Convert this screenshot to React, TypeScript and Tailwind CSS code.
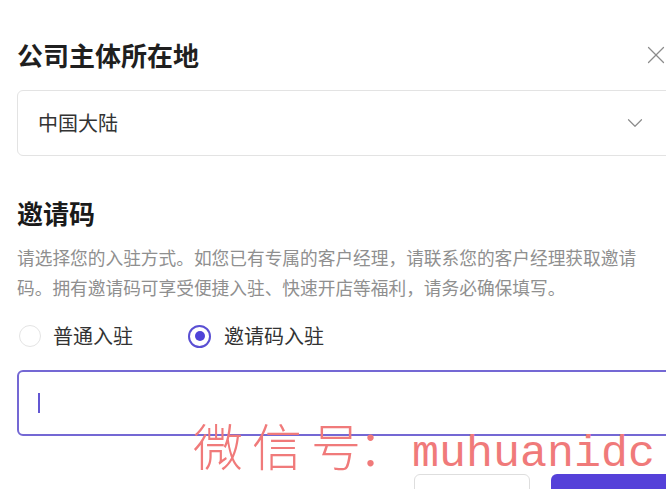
import { X, ChevronDown } from 'lucide-react';

const cjk = { fontFamily: '"Noto Sans CJK SC", "Noto Sans", sans-serif' };

export default function App() {
  return (
    <div className="relative w-[666px] h-[489px] overflow-hidden bg-white" style={cjk}>
      <div className="w-[700px] pl-[17px] pr-[17px] pt-[37px]">
        {/* Header */}
        <div className="flex items-center justify-between h-[36px]">
          <h1 className="text-[26px] leading-[36px] font-semibold text-[#1f1f1f]">公司主体所在地</h1>
          <button className="mr-[12px] text-[#8c8c8c]">
            <X className="w-[30px] h-[30px]" strokeWidth={1} />
          </button>
        </div>

        {/* Region select */}
        <div className="mt-[17px] h-[66px] rounded-[6px] border border-[#e3e3e3] flex items-center justify-between pl-[20px] pr-[34px]">
          <span className="text-[20px] text-[#333333]">中国大陆</span>
          <ChevronDown className="w-[26px] h-[26px] text-[#8c8c8c]" strokeWidth={1.1} />
        </div>

        {/* Invite code */}
        <h2 className="mt-[39px] text-[26px] leading-[36px] font-semibold text-[#1a1a1a]">邀请码</h2>
        <p className="mt-[11px] w-[625px] text-[17.7px] leading-[30px] text-[#8f8f8f]">
          请选择您的入驻方式。如您已有专属的客户经理，请联系您的客户经理获取邀请码。拥有邀请码可享受便捷入驻、快速开店等福利，请务必确保填写。
        </p>

        <div className="mt-[19px] h-[30px] flex items-center">
          <label className="flex items-center gap-[12px]">
            <span className="ml-[2px] w-[22px] h-[22px] rounded-full border border-[#e4e4e4]" />
            <span className="text-[20px] text-[#333333]">普通入驻</span>
          </label>
          <label className="ml-[55px] flex items-center gap-[13px]">
            <span className="w-[23px] h-[23px] rounded-full border-2 border-[#5a4fd3] flex items-center justify-center">
              <span className="w-[10px] h-[10px] rounded-full bg-[#4f43d8]" />
            </span>
            <span className="text-[20px] text-[#333333]">邀请码入驻</span>
          </label>
        </div>

        {/* Code input */}
        <div className="mt-[19px] h-[66px] rounded-[6px] border-2 border-[#7468d4] flex items-center pl-[19px]">
          <span className="w-[2px] h-[20px] bg-[#6357d3]" />
        </div>

        {/* Footer buttons */}
        <div className="mt-[38px] flex justify-end gap-[21px]">
          <button className="w-[116px] h-[40px] rounded-[6px] border border-[#dedede] bg-white" />
          <button className="w-[132px] h-[40px] rounded-[6px] bg-[#5541d9]" />
        </div>
      </div>

      {/* Watermark */}
      <div className="absolute left-[193px] top-[414px] flex items-baseline whitespace-nowrap text-[#f07a7a] pointer-events-none">
        <span className="text-[50px] leading-[60px] font-light tracking-[9px]">微信号</span>
        <span className="text-[50px] leading-[60px] font-light -ml-[12px]">：</span>
        <span
          className="text-[45px] leading-[60px] ml-[4px]"
          style={{ fontFamily: '"Liberation Mono", monospace' }}
        >
          muhuanidc
        </span>
      </div>
    </div>
  );
}
